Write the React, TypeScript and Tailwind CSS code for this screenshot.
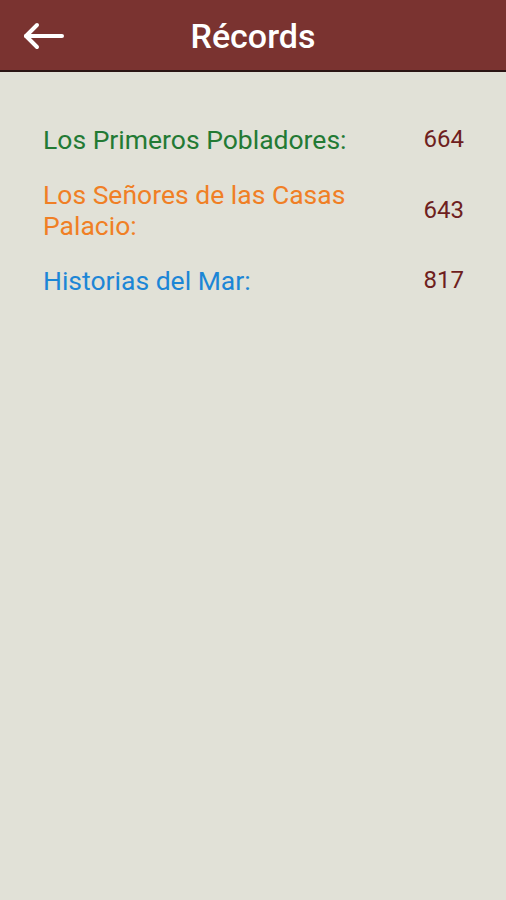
import React from 'react';

type Record = {
  nombre: string;
  puntos: number;
  color: string;
};

const records: Record[] = [
  { nombre: 'Los Primeros Pobladores:', puntos: 664, color: 'text-[#237a34]' },
  { nombre: 'Los Señores de las Casas Palacio:', puntos: 643, color: 'text-[#f07f25]' },
  { nombre: 'Historias del Mar:', puntos: 817, color: 'text-[#1c86d6]' },
];

const BackArrow: React.FC = () => (
  <svg width="42" height="28" viewBox="0 0 42 28" fill="none" stroke="white" strokeWidth="4" strokeLinecap="round" strokeLinejoin="round">
    <path d="M40 14H4" />
    <path d="M15 3L4 14l11 11" />
  </svg>
);

const App: React.FC = () => {
  return (
    <div className="min-h-[900px] bg-[#e1e1d7] font-['Roboto',sans-serif]">
      {/* Barra superior */}
      <div className="relative h-[72px] bg-[#7a3330] border-b-2 border-[#2a1514] flex items-center justify-center">
        <button className="absolute left-[22px] top-[22px]">
          <BackArrow />
        </button>
        <h1 className="text-white text-[34px] font-medium pt-[2px]">Récords</h1>
      </div>

      {/* Lista de récords */}
      <div className="pl-[43px] pr-[42px] pt-[52px] flex flex-col gap-[24px]">
        {records.map(r => (
          <div key={r.nombre} className="flex items-center">
            <div className={`flex-1 pr-[50px] text-[26.5px] leading-[31px] ${r.color}`}>{r.nombre}</div>
            <div className="text-[24px] leading-[31px] text-[#6e1e20]">{r.puntos}</div>
          </div>
        ))}
      </div>
    </div>
  );
};

export default App;
